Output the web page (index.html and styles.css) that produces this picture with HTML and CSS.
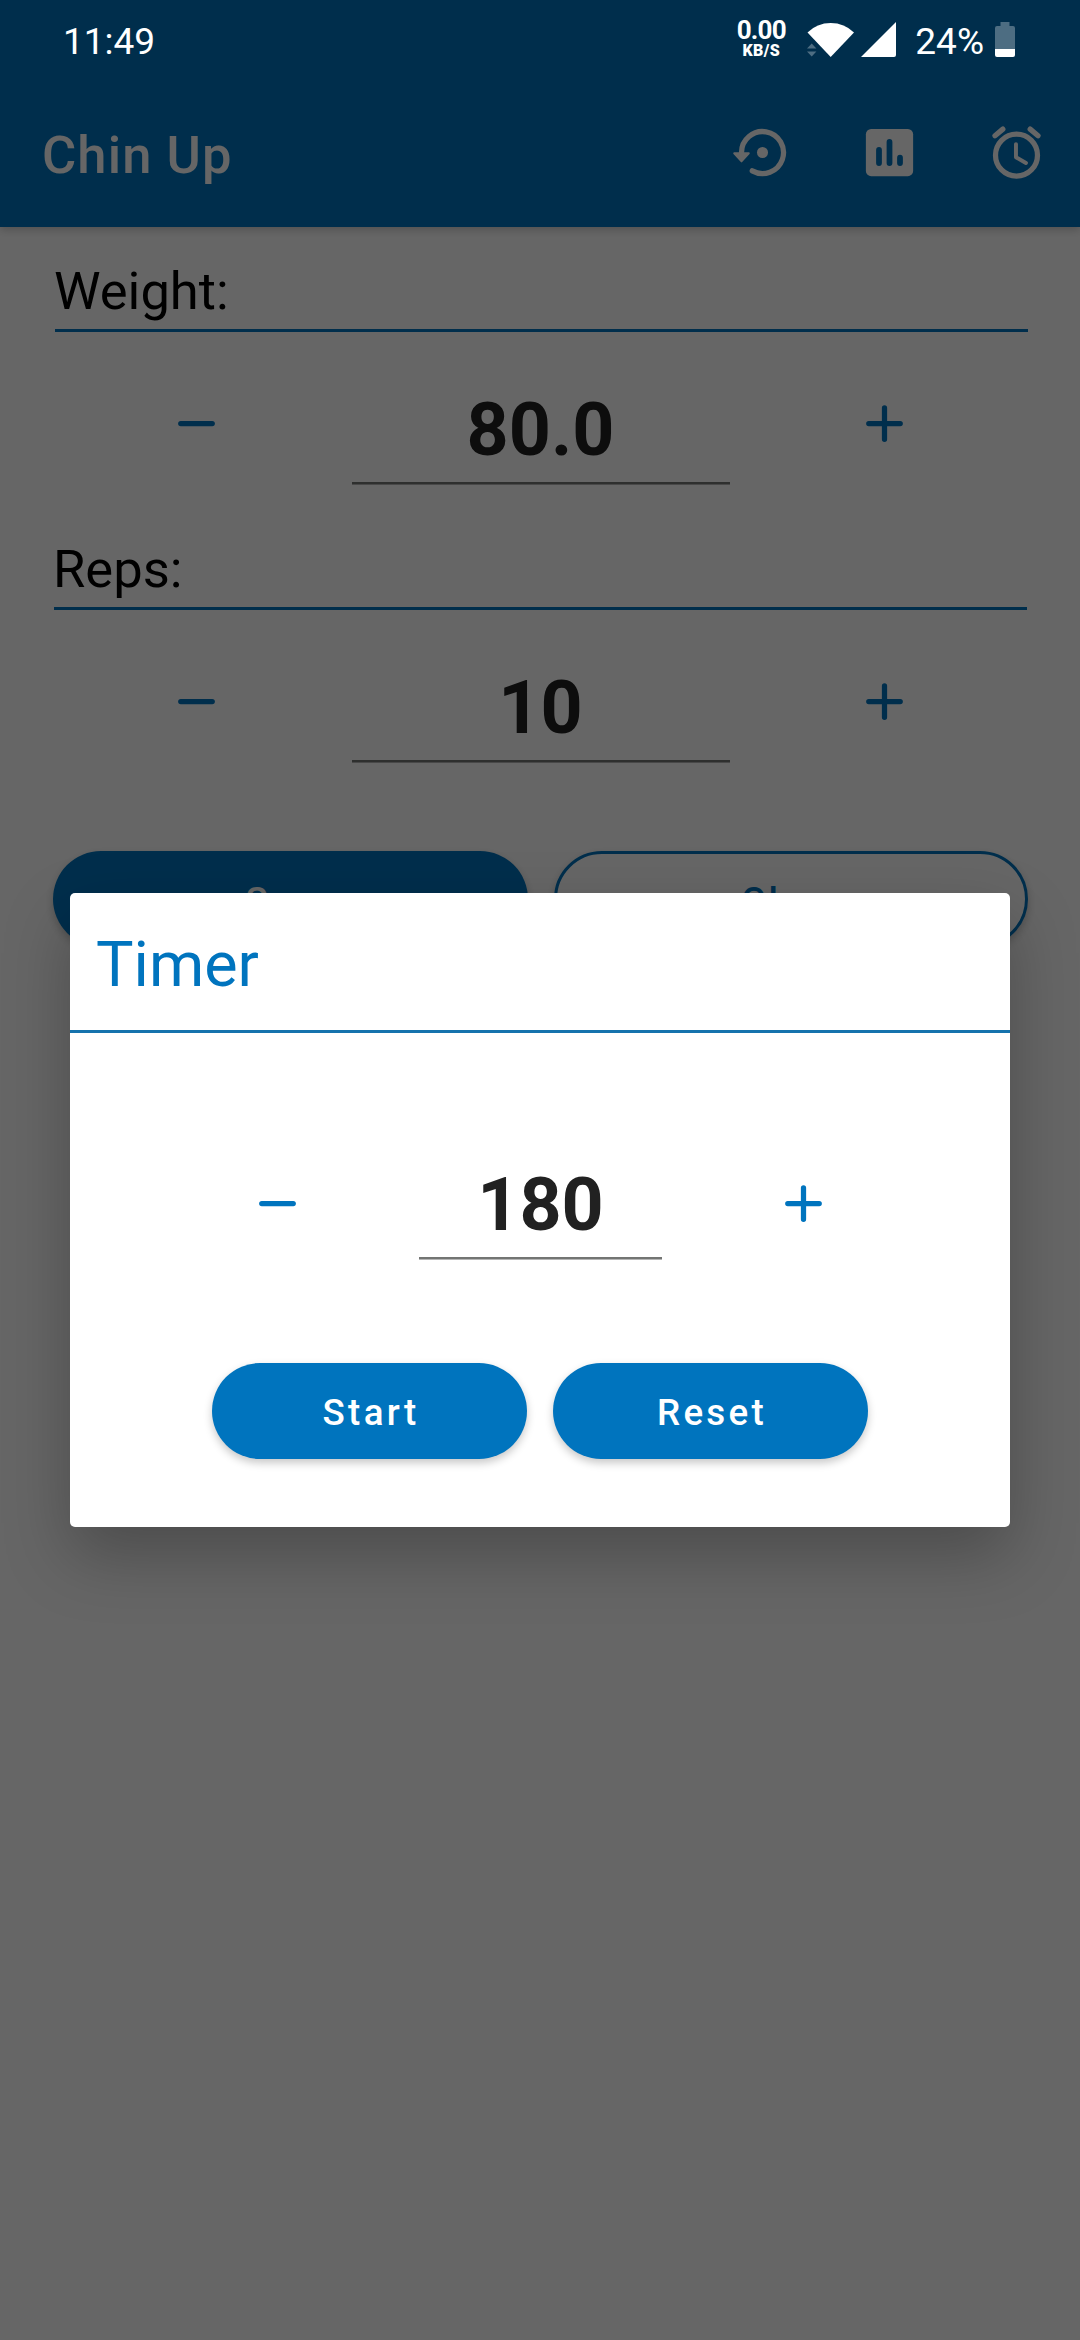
FILE: index.html
```html
<!DOCTYPE html>
<html lang="en">
<head>
<meta charset="utf-8">
<title>Chin Up</title>
<link rel="stylesheet" href="styles.css">
</head>
<body>
<main class="screen">
  <header class="appbar">
    <h1 class="appbar-title">Chin Up</h1>
    <nav class="actions">
      <svg class="action" viewBox="0 0 24 24">
        <path d="M4 12a8 8 0 1 1 4.1 7" fill="none" stroke="currentColor" stroke-width="2" stroke-linecap="round"/>
        <path d="M1.2 12.3h5.6L4 15.4z" fill="currentColor" stroke="currentColor" stroke-width=".7" stroke-linejoin="round"/>
        <circle cx="12" cy="12" r="2.1" fill="currentColor"/>
      </svg>
      <svg class="action" viewBox="0 0 24 24">
        <rect x="3" y="3" width="18" height="18" rx="2" fill="currentColor"/>
        <path class="bars" d="M8 11v5M12 8v8M16 14v2"/>
      </svg>
      <svg class="action" viewBox="0 0 24 24">
        <g fill="none" stroke="currentColor" stroke-linecap="round" stroke-linejoin="round">
          <circle cx="12" cy="13" r="8" stroke-width="2"/>
          <path d="M3.8 5.6l3-2.5M20.2 5.6l-3-2.5" stroke-width="2"/>
          <path d="M11.8 8.8v5l3.8 2.2" stroke-width="1.5"/>
        </g>
      </svg>
    </nav>
  </header>
  <section class="content">
    <h2 class="label">Weight:</h2>
    <div class="stepper">
      <button class="step"><svg viewBox="0 0 24 24"><path d="M6 12h12"/></svg></button>
      <div class="value">80.0</div>
      <button class="step"><svg viewBox="0 0 24 24"><path d="M6 12h12M12 6v12"/></svg></button>
    </div>
    <h2 class="label label-reps">Reps:</h2>
    <div class="stepper">
      <button class="step"><svg viewBox="0 0 24 24"><path d="M6 12h12"/></svg></button>
      <div class="value">10</div>
      <button class="step"><svg viewBox="0 0 24 24"><path d="M6 12h12M12 6v12"/></svg></button>
    </div>
    <div class="buttons">
      <button class="pill">Save</button>
      <button class="pill outlined">Clear</button>
    </div>
  </section>
</main>
<div class="scrim">
  <section class="dialog">
    <h2 class="dialog-title">Timer</h2>
    <div class="stepper timer">
      <button class="step"><svg viewBox="0 0 24 24"><path d="M6 12h12"/></svg></button>
      <div class="value">180</div>
      <button class="step"><svg viewBox="0 0 24 24"><path d="M6 12h12M12 6v12"/></svg></button>
    </div>
    <div class="buttons timer-buttons">
      <button class="pill">Start</button>
      <button class="pill">Reset</button>
    </div>
  </section>
</div>
<div class="statusbar">
  <span class="clock">11:49</span>
  <div class="status-right">
    <div class="speed"><span class="rate">0.00</span><span class="unit">KB/S</span></div>
    <svg class="wifi" viewBox="0 0 48 36">
      <path d="M.5 10.5Q10 1 23.700 1T47 10.500L23.700 35z" fill="#fff"/>
      <path d="M0 26.500l4.700-5 4.700 5zM0 29.500h9.400l-4.700 5z" fill="#4d6d82"/>
    </svg>
    <svg class="signal" viewBox="0 0 36 36"><path d="M0 35L35 0v33q0 2-2 2z" fill="#fff"/></svg>
    <span class="percent">24%</span>
    <svg class="battery" viewBox="0 0 20 35">
      <path d="M5.500 0h9v4H18q2 0 2 2v21H0V6q0-2 2-2h3.500z" fill="#4d6d82"/>
      <path d="M0 27h20v6q0 2-2 2H2q-2 0-2-2z" fill="#fff"/>
    </svg>
  </div>
</div>
</body>
</html>
```
FILE: styles.css
```css
* { box-sizing: border-box; }

body {
  margin: 0;
  width: 1080px;
  height: 2340px;
  overflow: hidden;
  background: #fff;
  color: #000;
  font-family: Roboto, "Liberation Sans", sans-serif;
}

h1, h2 { margin: 0; font-weight: 400; }

button {
  margin: 0;
  padding: 0;
  border: 0;
  background: none;
  color: inherit;
  font-family: inherit;
}

svg { display: block; }

.screen { height: 2340px; }

.appbar {
  display: flex;
  align-items: center;
  justify-content: space-between;
  height: 227px;
  padding: 78px 32px 0 42px;
  background: #0074be;
  color: #fff;
  box-shadow: 0 3px 8px rgba(0, 0, 0, .2);
}

.appbar-title {
  padding-top: 4px;
  font-size: 52.5px;
  font-weight: 500;
  line-height: 62px;
  letter-spacing: 1.1px;
}

.actions { display: flex; gap: 64px; }
.action { width: 63px; height: 63px; }
.bars { fill: none; stroke: #0074be; stroke-width: 2.2; stroke-linecap: round; }

.content { padding: 29px 53px 0 54px; }

.label {
  height: 76px;
  border-bottom: 3px solid #0074be;
  font-size: 52.5px;
  line-height: 70px;
  text-indent: -1px;
}

.content .label:first-child { margin-left: 1px; margin-right: -1px; }
.label-reps { margin-top: 45px; }

.stepper {
  display: flex;
  align-items: flex-start;
  justify-content: space-between;
  height: 157px;
  padding: 60px 111px 0;
}

.step { width: 63px; height: 63px; color: #0074be; }

.step path {
  fill: none;
  stroke: currentColor;
  stroke-width: 2;
  stroke-linecap: round;
}

.value {
  width: 378px;
  height: 92px;
  border-bottom: 2px solid #737573;
  box-shadow: 0 1px #b5b5b5;
  color: #212121;
  font-size: 73.5px;
  font-weight: 700;
  line-height: 77px;
  text-align: center;
}

.buttons {
  display: grid;
  grid-template-columns: 1fr 1fr;
  gap: 26px;
  margin: 84px -1px 0;
}

.pill {
  height: 96px;
  padding: 3px 0 0 3px;
  border-radius: 48px;
  background: #0074be;
  box-shadow: 0 4px 8px rgba(0, 0, 0, .22);
  color: #fff;
  font-size: 36.75px;
  font-weight: 500;
  letter-spacing: 3.28px;
  line-height: 93px;
}

.outlined { border: 3px solid #0074be; background: #fff; color: #0074be; line-height: 87px; }

.scrim {
  position: absolute;
  inset: 0;
  padding: 893px 70px 0;
  background: rgba(0, 0, 0, .6);
}

.dialog {
  height: 634px;
  border-radius: 5px;
  background: #fff;
  box-shadow: 0 28px 66px rgba(0, 0, 0, .26);
}

.dialog-title {
  height: 140px;
  padding-left: 26px;
  border-bottom: 3px solid #1673ad;
  color: #0074be;
  font-size: 63px;
  line-height: 143px;
}

.timer { height: 226px; padding: 139px 175px 0 176px; }
.timer .value { width: 243px; height: 87px; line-height: 67px; }
.timer-buttons { margin: 104px 142px 0; }

.statusbar {
  position: absolute;
  top: 0;
  left: 0;
  display: flex;
  justify-content: space-between;
  width: 1080px;
  height: 80px;
  padding: 0 65px 0 63px;
  color: #fff;
}

.clock, .percent { font-size: 37px; line-height: 83px; }
.status-right { display: flex; }

.speed {
  display: flex;
  flex-direction: column;
  align-items: center;
  width: 50px;
  margin-right: 21px;
  padding-top: 16px;
  font-weight: 700;
}

.rate { font-size: 26px; line-height: 28px; letter-spacing: -.8px; }
.unit { font-size: 16px; font-weight: 900; line-height: 14px; letter-spacing: .4px; }
.wifi { width: 48px; height: 36px; margin-top: 22px; }
.signal { width: 36px; height: 36px; margin: 22px 18px 0 6px; }
.battery { width: 20px; height: 35px; margin: 22px 0 0 11px; }
```
